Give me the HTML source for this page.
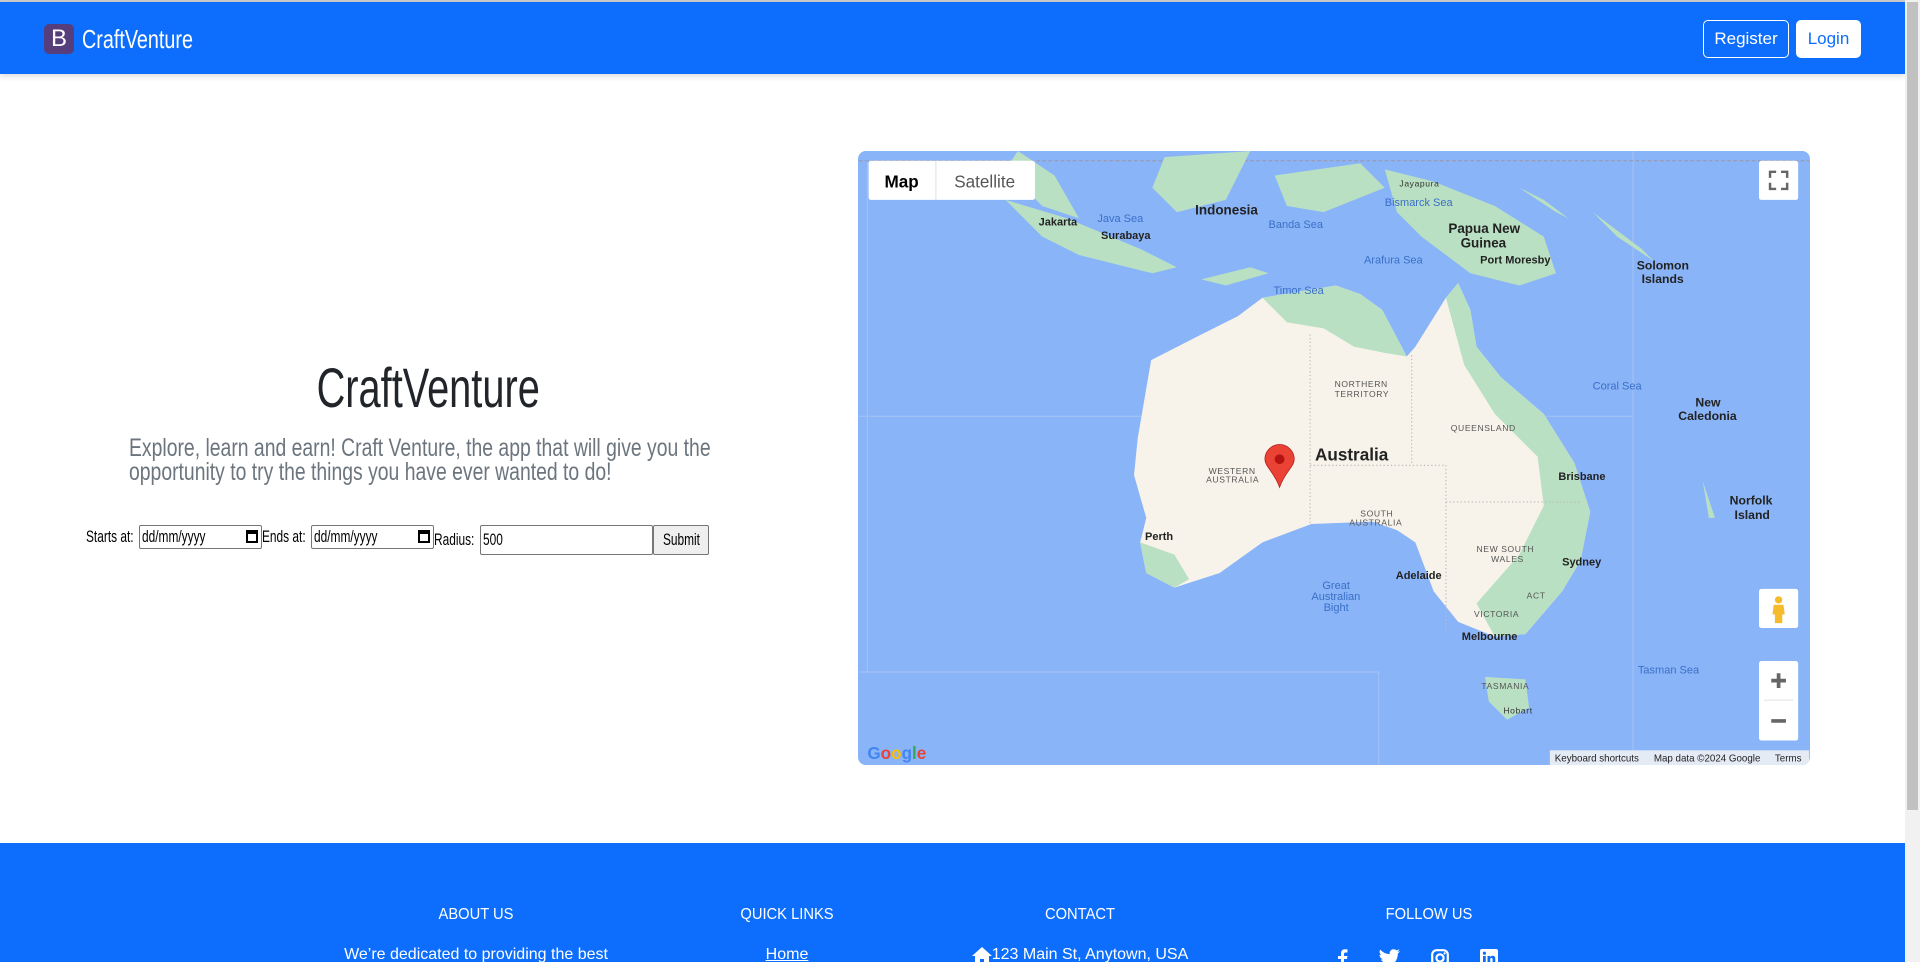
<!DOCTYPE html>
<html><head><meta charset="utf-8">
<style>
*{box-sizing:border-box;margin:0;padding:0}
html,body{width:1920px;height:962px;overflow:hidden;background:#fff}
body{font-family:"Liberation Sans",sans-serif;position:relative}
.nav{position:absolute;left:0;top:2px;width:1905px;height:72px;background:#0d6efd;box-shadow:0 2px 6px rgba(0,0,0,.15)}
.topline{position:absolute;left:0;top:0;width:1920px;height:2px;background:#ccc}
.logo{position:absolute;left:44px;top:22px;width:30px;height:30px;background:#563d7c;border-radius:5px;color:#fff;font-size:24px;text-align:center;line-height:30px}
.brand{position:absolute;left:82px;top:20px;color:#fff;font-size:26px;line-height:34px;transform:scaleX(.76)}
.btn{position:absolute;top:18px;height:38px;border-radius:5px;font-size:17px;line-height:36px;text-align:center}
.reg{left:1703px;width:86px;border:1px solid #fff;color:#fff}
.log{left:1796px;width:65px;background:#fff;color:#0d6efd;border:1px solid #fff}
.scroll{position:absolute;left:1905px;top:0;width:15px;height:962px;background:#f1f1f1}
.thumb{position:absolute;left:1907px;top:2px;width:11px;height:808px;background:#c1c1c1}
h1{position:absolute;left:0;width:857px;top:354px;text-align:center;font-weight:normal;font-size:56px;color:#212529;line-height:68px}
h1 span{display:inline-block;transform:scaleX(.71)}
.sub{position:absolute;left:129px;width:760px;top:436px;font-size:25px;line-height:24px;color:#6c757d;transform:scaleX(.775);transform-origin:0 0}
.form{position:absolute;left:86px;top:519px;font-size:17px;color:#000;display:flex;align-items:center;white-space:nowrap}
.lbl{display:inline-block;overflow:visible}
.lbl span{display:inline-block;transform:scaleX(.7);transform-origin:0 50%}
.inp{border:1px solid #767676;height:24px;font-size:17px;line-height:22px;padding-left:2px;position:relative;border-radius:2px;overflow:hidden}
.inp span.t{display:inline-block;transform:scaleX(.7);transform-origin:0 50%}
.map{position:absolute;left:858px;top:151px;width:952px;height:614px;border-radius:8px;overflow:hidden;background:#8ab4f8}
.foot{position:absolute;left:0;top:843px;width:1905px;height:119px;background:#0d6efd;color:#fff}
.fh{position:absolute;top:63px;font-size:16px;transform:translateX(-50%) scaleX(.92);white-space:nowrap}
.ft{position:absolute;top:103px;font-size:16px;transform:translateX(-50%);white-space:nowrap}
.ic{position:absolute;top:106px}
</style></head><body>
<div class="topline"></div>
<div class="nav">
<div class="logo">B</div><div class="brand" style="transform-origin:0 50%">CraftVenture</div>
<div class="btn reg">Register</div><div class="btn log">Login</div>
</div>
<h1><span>CraftVenture</span></h1>
<div class="sub">Explore, learn and earn! Craft Venture, the app that will give you the<br>opportunity to try the things you have ever wanted to do!</div>
<div class="form">
<span class="lbl" style="width:53px"><span>Starts at:</span></span><span class="inp" style="width:123px"><span class="t">dd/mm/yyyy</span><span style="position:absolute;right:3px;top:4px;width:12px;height:13px;border:2px solid #000;border-top-width:4px"></span></span>
<span class="lbl" style="width:49px"><span>Ends at:</span></span><span class="inp" style="width:123px"><span class="t">dd/mm/yyyy</span><span style="position:absolute;right:3px;top:4px;width:12px;height:13px;border:2px solid #000;border-top-width:4px"></span></span>
<span class="lbl" style="width:46px;margin-top:6px"><span>Radius:</span></span><span class="inp" style="width:173px;height:30px;line-height:28px;margin-top:6px"><span class="t">500</span></span><span class="inp" style="width:56px;height:30px;line-height:28px;margin-top:6px;background:#efefef;text-align:center;padding:0"><span class="t" style="transform-origin:50% 50%">Submit</span></span>
</div>
<div class="map">
<svg width="952" height="614" viewBox="0 0 777 502" style="display:block;font-family:'Liberation Sans',sans-serif">
<rect width="777" height="502" fill="#8ab4f8"/>
<g stroke="#9fc0f5" stroke-width="1" fill="none"><line x1="0" y1="217" x2="633" y2="217"/><line x1="0" y1="426" x2="425" y2="426"/><line x1="425" y1="426" x2="425" y2="502"/><line x1="633" y1="0" x2="633" y2="502"/><line x1="7" y1="8" x2="7" y2="426"/></g>
<line x1="0" y1="8" x2="777" y2="8" stroke="#9a9ab0" stroke-dasharray="3,2"/>
<path d="M239,171 L280,150 L310,135 L330,120 L360,115 L390,110 L410,117 L428,130 L448,168 L455,160 L480,120 L490,108 L500,130 L505,160 L525,185 L560,215 L585,255 L598,295 L590,335 L575,360 L545,395 L520,397 L490,385 L470,360 L455,320 L440,310 L420,303 L370,305 L330,320 L295,345 L258,357 L235,345 L230,320 L235,300 L225,265 L228,235 Z" fill="#f7f3ea"/>
<path d="M330,120 L360,115 L390,110 L410,117 L428,130 L448,168 L430,165 L405,160 L380,145 L350,140 Z M480,120 L490,108 L500,130 L505,160 L525,185 L560,215 L585,255 L598,295 L590,335 L575,360 L545,395 L520,397 L505,370 L540,330 L560,290 L555,250 L520,215 L495,175 Z M230,320 L258,330 L270,350 L258,357 L235,345 Z" fill="#b9e0c2"/>
<path d="M512,430 L545,432 L548,455 L530,465 L515,450 Z" fill="#b9e0c2"/>
<path d="M120,40 L170,55 L230,80 L260,95 L240,100 L180,85 L150,70 Z M250,5 L320,0 L300,40 L260,50 L240,30 Z M340,20 L410,10 L430,30 L380,50 L350,45 Z M430,15 L470,25 L520,45 L560,70 L570,100 L540,110 L500,100 L460,70 L440,50 Z M540,30 L570,50 L580,55 L560,40 Z M600,50 L640,80 L650,90 L620,70 Z M280,105 L320,95 L335,100 L300,110 Z" fill="#b9e0c2"/>
<g fill="#b9e0c2" stroke="none"><path d="M130,0 L160,20 L180,55 L150,45 L120,15 Z"/><path d="M690,270 L700,300 L695,300 Z"/></g>
<g stroke="#bbb" stroke-dasharray="1,2" fill="none"><path d="M369,150 L369,305 M369,257 L480,257 L480,395 M452,167 L452,257 M480,287 L590,287"/></g>
<g font-size="11" fill="#222" font-weight="bold">
<text x="275" y="52" font-size="11">Indonesia</text><text x="147" y="61" font-size="9">Jakarta</text><text x="198" y="72" font-size="9">Surabaya</text>
<text x="482" y="67" font-size="11">Papua New</text><text x="492" y="79" font-size="11">Guinea</text><text x="508" y="92" font-size="9">Port Moresby</text>
<text x="636" y="97" font-size="10">Solomon</text><text x="640" y="108" font-size="10">Islands</text>
<text x="684" y="209" font-size="10">New</text><text x="670" y="220" font-size="10">Caledonia</text>
<text x="712" y="289" font-size="10">Norfolk</text><text x="716" y="301" font-size="10">Island</text>
<text x="373" y="253" font-size="14">Australia</text>
<text x="234" y="318" font-size="9">Perth</text><text x="572" y="269" font-size="9">Brisbane</text><text x="575" y="339" font-size="9">Sydney</text>
<text x="439" y="350" font-size="9">Adelaide</text><text x="493" y="400" font-size="9">Melbourne</text>
</g>
<g font-size="7" fill="#555" letter-spacing="0.5"><text x="389" y="193">NORTHERN</text><text x="389" y="201">TERRITORY</text><text x="484" y="229">QUEENSLAND</text><text x="286" y="264">WESTERN</text><text x="284" y="271">AUSTRALIA</text><text x="410" y="299">SOUTH</text><text x="401" y="306">AUSTRALIA</text><text x="505" y="328">NEW SOUTH</text><text x="517" y="336">WALES</text><text x="546" y="366">ACT</text><text x="503" y="381">VICTORIA</text><text x="509" y="440">TASMANIA</text><text x="527" y="460" fill="#333">Hobart</text><text x="442" y="29" fill="#333">Jayapura</text></g>
<g font-size="9" fill="#3a6fc7"><text x="195" y="58">Java Sea</text><text x="335" y="63">Banda Sea</text><text x="413" y="92">Arafura Sea</text><text x="339" y="117">Timor Sea</text><text x="430" y="45">Bismarck Sea</text><text x="600" y="195">Coral Sea</text><text x="637" y="427">Tasman Sea</text><text x="379" y="358">Great</text><text x="370" y="367">Australian</text><text x="380" y="376">Bight</text></g>
<path d="M344,275 C340,263 332,258 332,252 A12,12 0 0 1 356,252 C356,258 348,263 344,275 Z" fill="#ea4335" stroke="#b31412" stroke-width="0.6"/>
<circle cx="344" cy="252" r="4" fill="#b31412"/>
<rect x="8" y="8" width="136" height="32" fill="#fff" rx="2"/><line x1="63" y1="8" x2="63" y2="40" stroke="#e6e6e6"/>
<text x="21" y="30" font-size="14" fill="#000" font-weight="bold">Map</text><text x="78" y="30" font-size="14" fill="#555">Satellite</text>
<rect x="736" y="8" width="32" height="32" fill="#fff" rx="2"/><path d="M745,22 v-5 h5 M754,17 h5 v5 M759,26 v5 h-5 M750,31 h-5 v-5" stroke="#666" stroke-width="2" fill="none"/>
<rect x="736" y="358" width="32" height="32" fill="#fff" rx="2"/><circle cx="752" cy="367" r="3" fill="#f6bb2a"/><path d="M748,371 h8 l1,8 h-2 v7 h-6 v-7 h-2 Z" fill="#f6bb2a"/>
<rect x="736" y="417" width="32" height="65" fill="#fff" rx="2"/><path d="M746,433 h12 M752,427 v12 M746,466 h12" stroke="#666" stroke-width="3"/><line x1="740" y1="449" x2="764" y2="449" stroke="#e6e6e6"/>
<text x="7" y="497" font-size="14" font-weight="bold"><tspan fill="#4285f4">G</tspan><tspan fill="#ea4335">o</tspan><tspan fill="#fbbc05">o</tspan><tspan fill="#4285f4">g</tspan><tspan fill="#34a853">l</tspan><tspan fill="#ea4335">e</tspan></text>
<rect x="565" y="490" width="212" height="12" fill="#f5f5f5" opacity=".85"/>
<text x="569" y="499" font-size="8" fill="#222">Keyboard shortcuts</text><text x="650" y="499" font-size="8" fill="#222">Map data ©2024 Google</text><text x="749" y="499" font-size="8" fill="#222">Terms</text>
</svg>
</div>
<div class="foot">
<div class="fh" style="left:476px">ABOUT US</div><div class="fh" style="left:787px">QUICK LINKS</div><div class="fh" style="left:1080px">CONTACT</div><div class="fh" style="left:1429px">FOLLOW US</div>
<div class="ft" style="left:476px">We’re dedicated to providing the best</div>
<div class="ft" style="left:787px;text-decoration:underline">Home</div>
<div class="ft" style="left:1090px">123 Main St, Anytown, USA</div>
<svg class="ic" style="left:972px;top:104px" width="20" height="18" viewBox="0 0 20 18"><path d="M10,0 L20,9 H17 V18 H12 V12 H8 V18 H3 V9 H0 Z" fill="#fff"/></svg>
<svg class="ic" style="left:1335px" width="14" height="18" viewBox="0 0 14 18"><path d="M9,18 V10 H12 L12.5,7 H9 V5 C9,4 9.5,3.5 10.5,3.5 H12.5 V0.5 C12,0.4 11,0.3 10,0.3 C7.5,0.3 6,1.8 6,4.5 V7 H3 V10 H6 V18 Z" fill="#fff"/></svg>
<svg class="ic" style="left:1378px" width="22" height="18" viewBox="0 0 22 18"><path d="M22,2 C21,2.5 20,2.8 19.5,2.8 C20.5,2 21,1.2 21.3,0.3 C20.4,0.8 19.4,1.2 18.4,1.4 C16.5,-0.6 13,0 12,2.5 C11.5,3.5 11.5,4.5 11.7,5.2 C8,5 4.5,3.3 2.2,0.5 C1,2.5 1.6,5 3.5,6.3 C2.8,6.3 2.1,6.1 1.5,5.8 C1.5,8 3,9.8 5,10.2 C4.4,10.4 3.7,10.4 3,10.3 C3.6,12.1 5.2,13.3 7.1,13.4 C5.3,14.8 3,15.5 0.5,15.2 C9,20.5 20,15.5 19.8,4.5 C20.7,3.8 21.5,3 22,2 Z" fill="#fff"/></svg>
<svg class="ic" style="left:1431px" width="18" height="18" viewBox="0 0 18 18"><rect x="1.2" y="1.2" width="15.6" height="15.6" rx="4.5" fill="none" stroke="#fff" stroke-width="2.2"/><circle cx="9" cy="9" r="3.6" fill="none" stroke="#fff" stroke-width="2.2"/><circle cx="13.6" cy="4.4" r="1.1" fill="#fff"/></svg>
<svg class="ic" style="left:1480px" width="18" height="18" viewBox="0 0 18 18"><rect width="18" height="18" rx="2" fill="#fff"/><rect x="3" y="7" width="2.8" height="8" fill="#0d6efd"/><circle cx="4.4" cy="4.2" r="1.6" fill="#0d6efd"/><path d="M7.5,7 H10 V8.3 C10.6,7.2 11.6,6.8 12.7,6.8 C14.6,6.8 15.3,8 15.3,10 V15 H12.6 V10.6 C12.6,9.6 12.3,9 11.4,9 C10.5,9 10.2,9.7 10.2,10.6 V15 H7.5 Z" fill="#0d6efd"/></svg>
</div>
<div class="scroll"></div><div class="thumb"></div>
</body></html>
